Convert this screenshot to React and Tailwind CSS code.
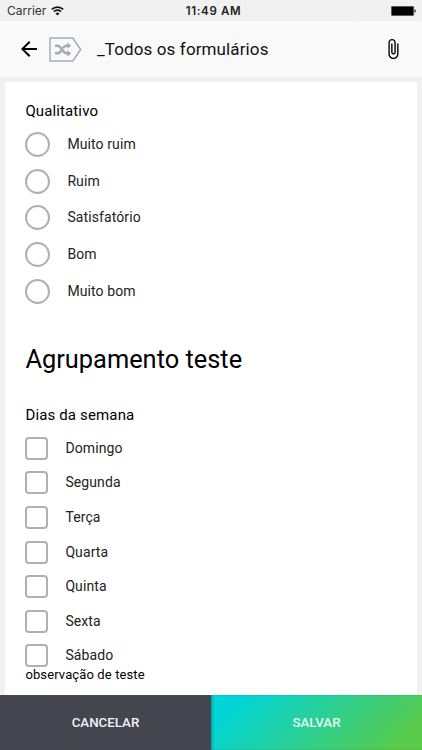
import { MdArrowBack, MdAttachFile } from "react-icons/md";

const ratings = ["Muito ruim", "Ruim", "Satisfatório", "Bom", "Muito bom"];
const days = ["Domingo", "Segunda", "Terça", "Quarta", "Quinta", "Sexta", "Sábado"];

function StatusBar() {
  return (
    <div className="grid grid-cols-3 items-center h-[21px] shrink-0 pl-[7px] pr-[6px] font-['Inter',sans-serif] text-[#333]">
      <div className="flex items-center gap-[5px] text-[12px]">
        <span>Carrier</span>
        <svg width="13" height="10" viewBox="0 0 13 10" fill="none" stroke="#111" strokeWidth="1.7">
          <path d="M0.8 3.4a8.2 8.2 0 0 1 11.4 0" />
          <path d="M2.9 5.7a5.1 5.1 0 0 1 7.2 0" />
          <path d="M6.5 9.5L4.5 7.4a2.9 2.9 0 0 1 4 0z" fill="#111" stroke="none" />
        </svg>
      </div>
      <span className="pl-[4px] pt-px text-center text-[11.5px] leading-4 font-semibold tracking-[0.65px] text-[#222]">
        11:49 AM
      </span>
      <svg className="justify-self-end" width="25" height="10" viewBox="0 0 25 10">
        <rect x="0.25" y="0.25" width="22.5" height="9.5" rx="1" fill="#000" stroke="#888" strokeWidth="0.5" />
        <path d="M23.5 3.5h0.6q0.6 0 0.6 1.5t-0.6 1.5h-0.6z" fill="#111" />
      </svg>
    </div>
  );
}

function FormBadge() {
  return (
    <svg width="33" height="25" viewBox="0 0 33 25" fill="none" stroke="#a6a9b7">
      <path d="M1 1h22.8l7.9 11.5-7.9 11.5H1z" strokeWidth="1.5" />
      <path
        d="M6 8.7h2.5c4 0 5 7.6 9 7.6h1.5M6 16.3h2.5c1.7 0 2.8-1.3 3.5-2.7M14 11.2c.8-1.4 1.8-2.5 3.5-2.5h1.5"
        strokeWidth="2.5"
      />
      <path d="M18.2 5.6l4.1 3.1-4.1 3.1zM18.2 13.2l4.1 3.1-4.1 3.1z" fill="#a6a9b7" stroke="none" />
    </svg>
  );
}

function Header() {
  return (
    <header className="flex items-center h-14 shrink-0 pl-[17px] pr-[18px] bg-[repeating-linear-gradient(45deg,#fcfcfc_0px,#fcfcfc_1.2px,#f3f3f3_2px,#fcfcfc_2.83px)]">
      <MdArrowBack size={24} />
      <div className="ml-2">
        <FormBadge />
      </div>
      <h1 className="ml-[15px] flex-1 text-[17px] leading-6 tracking-[0.12px] text-[#111]">_Todos os formulários</h1>
      <MdAttachFile size={22} />
    </header>
  );
}

function RadioRow({ label }) {
  return (
    <label className="flex items-center h-[36.65px] gap-[17px] text-[14px] tracking-[0.1px] text-[#222]">
      <span className="size-[25px] rounded-full border-2 border-[#b0b0b0]" />
      {label}
    </label>
  );
}

function CheckRow({ label }) {
  return (
    <label className="flex items-center h-[34.65px] gap-[17px] text-[14px] tracking-[0.1px] text-[#222]">
      <span className="size-[23px] rounded-[4px] border-2 border-[#b0b0b0]" />
      {label}
    </label>
  );
}

export default function App() {
  return (
    <div className="flex flex-col h-[750px] overflow-hidden bg-[#f1f1f1] text-black font-['Roboto',sans-serif]">
      <StatusBar />
      <Header />
      <main className="flex-1 min-h-0 mt-[5px] ml-[5.4px] mr-[5px] pl-[20px] pt-[18px] bg-white overflow-hidden">
        <h3 className="text-[15px] leading-[22px] tracking-[0.12px]">Qualitativo</h3>
        <div className="pt-[4.2px]">
          {ratings.map((r) => (
            <RadioRow key={r} label={r} />
          ))}
        </div>
        <h2 className="mt-[31.2px] text-[25.4px] leading-9">Agrupamento teste</h2>
        <h3 className="mt-[27.2px] text-[15px] leading-[22px] tracking-[0.15px]">Dias da semana</h3>
        <div className="pt-[5px]">
          {days.map((d) => (
            <CheckRow key={d} label={d} />
          ))}
        </div>
        <p className="-mt-[6.4px] text-[13px] leading-4 tracking-[0.12px]">observação de teste</p>
      </main>
      <footer className="grid grid-cols-2 h-[55px] shrink-0 text-[13.3px] font-medium">
        <button className="bg-[#43454f] text-[#f3f3f5]">CANCELAR</button>
        <button className="bg-[linear-gradient(135deg,#00d4d8_12%,#5acb4b_90%)] text-[#e2faf0] shadow-[inset_2px_0_2px_rgba(0,0,0,0.18)]">
          SALVAR
        </button>
      </footer>
    </div>
  );
}
